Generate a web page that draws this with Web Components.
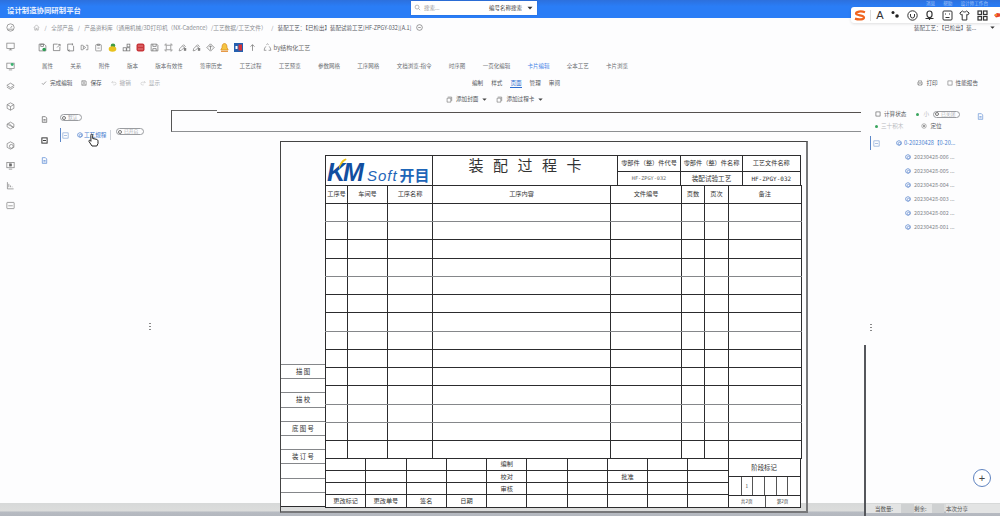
<!DOCTYPE html>
<html lang="zh">
<head>
<meta charset="utf-8">
<title>设计制造协同研制平台</title>
<style>
	html, body {
		margin: 0;
		height: 516px;
		overflow: hidden;
		background: #fdfdfe;
		font: 5.6px "Noto Sans CJK SC", "Liberation Sans", sans-serif;
		color: #5a5d63;
	}
	body {
		display: flex;
		flex-direction: column;
		position: relative;
	}
</style>
</head>
<body>
<app-header></app-header>
<sogou-bar></sogou-bar>
<app-shell>
	<side-nav slot="nav"></side-nav>
	<bread-crumb></bread-crumb>
	<tool-bar></tool-bar>
	<tab-row></tab-row>
	<action-bar></action-bar>
	<add-row></add-row>
	<work-space>
		<left-panel slot="left"></left-panel>
		<sheet-canvas slot="canvas">
			<process-card></process-card>
		</sheet-canvas>
		<right-panel slot="right"></right-panel>
	</work-space>
</app-shell>
<status-bar></status-bar>
<add-button></add-button>

<script>
	const ICONS = {
		home: '<path d="M2 8l6-6 6 6M4 7v7h3v-4h2v4h3V7"/>',
		gauge: '<circle cx="8" cy="8" r="6.5"/><path d="M8 9l3-4M3.5 11h9"/>',
		monitor: '<rect x="1.5" y="2" width="13" height="9.5"/><path d="M5 14h6M8 11.5V14"/>',
		monitorGreen: '<rect x="1.5" y="2" width="13" height="9.5"/><path d="M5 14h6"/><circle cx="11" cy="4.5" r="2.6" fill="#3cb371" stroke="none"/>',
		layers: '<path d="M8 2l6.5 4L8 10 1.5 6zM1.5 9L8 13l6.5-4"/>',
		cube: '<path d="M8 1.5l6 3.2v6.6l-6 3.2-6-3.2V4.7zM2 4.7L8 8l6-3.3M8 8v6.5"/>',
		stack: '<path d="M8 2l6 3.5v5L8 14l-6-3.5v-5zM2 5.5l12 6M5 4l8 8"/>',
		hexdot: '<path d="M8 1.5l6 3.2v6.6l-6 3.2-6-3.2V4.7z"/><circle cx="9.5" cy="9.5" r="3.4"/>',
		screen: '<rect x="1.5" y="2.5" width="13" height="9.5"/><path d="M5 14.5h6"/><rect x="6" y="5" width="4" height="4" fill="#666"/>',
		chart: '<path d="M2.5 2v12h11M5 11V5M8 11V8M11 11v-1"/>',
		panel: '<rect x="1.5" y="2.5" width="13" height="11" rx="1"/><path d="M4 8.5h8"/>',
		save: '<path d="M2 2h9l3 3v9H2z"/><rect x="5" y="2" width="5" height="4"/><circle cx="11" cy="11.5" r="3.2" fill="#2f9e55" stroke="none"/>',
		boxOut: '<path d="M10 2H2.5v11.5H14V7M9 8l5-5M11 2.5h3.5V6"/>',
		boxSync: '<path d="M12 2H3v11h3M5 14h8.500V5M10.500 1l2 1.500-2 1.500M6 12l-2 1.500 2 1.500"/>',
		arrowBox: '<path d="M5.500 4H2v8h3.500M10.500 4H14v8h-3.500M6 5l4 3-4 3z"/>',
		clip: '<rect x="3" y="3" width="10" height="11" rx="1"/><path d="M6 2h4v2.500H6zM6 9h4"/>',
		blocks: '<rect x="2" y="8.500" width="5.500" height="5.500"/><rect x="8.500" y="8.500" width="5.500" height="5.500"/><rect x="9" y="2" width="5" height="5"/>',
		floppy: '<path d="M2 2h10l2 2v10H2z"/><path d="M5 2v4h6V2M5 14v-4h6v4"/>',
		frame: '<path d="M5 2H2v3M11 2h3v3M14 11v3h-3M5 14H2v-3M4 4h8v8H4z"/>',
		pen: '<path d="M2 14l1-4 7-7 3 3-7 7zM8 5l3 3"/><rect x="11" y="10" width="3" height="3" fill="#777"/>',
		diamond: '<path d="M8 1.500l6.500 6.500L8 14.500 1.500 8zM8 12V5M5.500 7.500L8 5l2.500 2.500"/>',
		up: '<path d="M8 14V3M4.500 6.500L8 3l3.500 3.500"/>',
		recycle: '<path d="M6 3l2-1.500L10 3M3 9l-1 4h4M13 9l1 4h-4M5 6l-2 3M11 6l2 3"/>',
		check: '<path d="M2.500 8.500l3.500 3.500 7.500-8"/>',
		undo: '<path d="M5 3L2 6l3 3M2 6h8a3.500 3.500 0 010 7H6"/>',
		redo: '<path d="M11 3l3 3-3 3M14 6H6a3.500 3.500 0 000 7h4"/>',
		print: '<path d="M4 6V2h8v4M4 12H2V6h12v6h-2M4 10h8v4H4z"/>',
		square: '<rect x="2.500" y="2.500" width="11" height="11"/>',
		copy: '<path d="M4 2.500h9v9M2.500 5h8.500v9H2.500z"/>',
		file: '<path d="M3 1.500h7l3 3v10H3zM5.500 8h5M5.500 11h5"/>',
		clock: '<circle cx="8" cy="8" r="6.500"/><path d="M5 8h6"/>',
		target: '<circle cx="8" cy="8" r="6"/><circle cx="8" cy="8" r="1.800" fill="#666"/>',
		search: '<circle cx="7" cy="7" r="4.500"/><path d="M10.500 10.500L14 14"/>',
		treeBox: '<rect x="2" y="2" width="12" height="12"/><path d="M4.500 8h7"/>',
		caret: '<path d="M3 5.500h10L8 11z" fill="currentColor" stroke="none"/>'
	};

	class UiIcon extends HTMLElement {
		connectedCallback() {
			const size = this.getAttribute('s') || 9;
			const color = this.getAttribute('c') || '#6b6e73';
			const w = this.getAttribute('w') || 1.3;
			this.attachShadow({mode: 'open'}).innerHTML = `
				<style>:host { display: inline-flex; flex: none; color: ${color}; }</style>
				<svg width="${size}" height="${size}" viewBox="0 0 16 16" fill="none" stroke="currentColor" stroke-width="${w}">${ICONS[this.getAttribute('n')] || this.innerHTML}</svg>`;
		}
	}

	class AppHeader extends HTMLElement {
		constructor() {
			super();
			this.attachShadow({mode: 'open'}).innerHTML = `
				<style>
					:host {
						display: flex;
						align-items: center;
						height: 18px;
						padding-left: 7px;
						background: linear-gradient(#2d70dd, #2a7df6 35%);
						color: #fff;
					}
					.title { width: 404px; font-size: 7.4px; font-weight: 700; color: #eef4ff; }
					.search {
						display: flex;
						align-items: center;
						width: 126px;
						height: 14px;
						box-sizing: border-box;
						margin-top: -3px;
						padding: 0 3px;
						background: #fff;
						color: #999;
						font-size: 5.5px;
						box-shadow: 0 0 1px rgba(0,0,0,.25);
					}
					.ph { margin-left: 3px; width: 65px; }
					.kind { color: #444; width: 37px; }
					.user { margin-left: auto; display: flex; gap: 8px; padding: 0 12px 11px 0; font-size: 4.600px; line-height: 1; color: #a9c6f7; }
				</style>
				<div class="title">设计制造协同研制平台</div>
				<div class="search">
					<ui-icon n="search" s="7" c="#888"></ui-icon>
					<span class="ph">搜索...</span>
					<span class="kind">编号名称搜索</span>
					<ui-icon n="caret" s="8" c="#333"></ui-icon>
				</div>
				<div class="user"><span>消息</span><span>帮助</span><span>设计师工作台</span></div>`;
		}
	}

	class SogouBar extends HTMLElement {
		constructor() {
			super();
			this.attachShadow({mode: 'open'}).innerHTML = `
				<style>
					:host {
						position: absolute;
						left: 851px;
						top: 7px;
						width: 149px;
						height: 16px;
						display: flex;
						align-items: center;
						z-index: 5;
						background: #fff;
						border-radius: 3px 0 0 3px;
						box-shadow: 0 1px 3px rgba(0,0,0,.12);
						color: #333;
					}
					svg { flex: none; }
					.logo { margin-left: 3px; }
					.sep { width: 1px; height: 11px; background: #ddd; margin: 0 5px 0 4px; }
					.a { font: 11px "Liberation Sans", sans-serif; width: 10px; text-align: center; margin-right: 6px; }
					.i { margin-right: 6.500px; }
				</style>
				<svg class="logo" width="12" height="11" viewBox="0 0 12 11" fill="none" stroke="#f0641e" stroke-width="2.200">
					<path d="M11 2.200C7 .8 2 1.500 2 3.600c0 2 8 1.600 8 3.800C10 9.500 5 10 1 8.600"/>
				</svg>
				<div class="sep"></div>
				<div class="a">A</div>
				<svg class="i" width="10" height="10" viewBox="0 0 10 10" fill="#222"><circle cx="3" cy="2.500" r="1.500"/><circle cx="7" cy="6" r="1.800"/></svg>
				<svg class="i" width="11" height="11" viewBox="0 0 11 11" fill="none" stroke="#333"><circle cx="5.500" cy="5.500" r="4.700"/><path d="M3.500 4v2a2 2 0 004 0V4"/></svg>
				<svg class="i" width="11" height="11" viewBox="0 0 11 11" fill="none" stroke="#333" stroke-width="1.200"><rect x="3" y="1" width="5" height="6.500" rx="2.500"/><path d="M1.500 8.500h8M5.500 8v2"/></svg>
				<svg class="i" width="11" height="11" viewBox="0 0 11 11" fill="none" stroke="#333"><rect x="1" y="1" width="9" height="9" rx="1"/><path d="M3 4h1M7 4h1M3.500 7.500h4"/></svg>
				<svg class="i" width="11" height="11" viewBox="0 0 11 11" fill="none" stroke="#333"><path d="M3.500 1L.8 3l1.400 2 1-.6V10h4.600V4.400l1 .6 1.400-2L7.500 1c-.5 1.300-3.500 1.300-4 0z"/></svg>
				<svg class="i" width="11" height="11" viewBox="0 0 11 11" fill="none" stroke="#333" stroke-width="1.200"><rect x="1" y="1" width="3.500" height="3.500"/><rect x="6.500" y="1" width="3.500" height="3.500"/><rect x="1" y="6.500" width="3.500" height="3.500"/><rect x="6.500" y="6.500" width="3.500" height="3.500"/></svg>
				<svg width="6" height="7" viewBox="0 0 6 7"><path d="M0 3l3-2 3 .5v3l-4 1z" fill="#e8452c"/><circle cx="2" cy="3" r="1" fill="#f5a623"/></svg>`;
		}
	}

	class AppShell extends HTMLElement {
		constructor() {
			super();
			this.attachShadow({mode: 'open'}).innerHTML = `
				<style>
					:host { display: flex; flex: 1; min-height: 0; }
					.main { flex: 1; min-width: 0; display: flex; flex-direction: column; }
				</style>
				<slot name="nav"></slot>
				<div class="main"><slot></slot></div>`;
		}
	}

	class SideNav extends HTMLElement {
		constructor() {
			super();
			const names = ['gauge', 'monitor', 'monitorGreen', 'layers', 'cube', 'stack', 'hexdot', 'screen', 'chart', 'panel'];
			this.attachShadow({mode: 'open'}).innerHTML = `
				<style>
					:host {
						display: flex;
						flex-direction: column;
						gap: 10.800px;
						width: 21px;
						padding: 4.500px 0 0 6px;
						box-sizing: border-box;
					}
				</style>
				${names.map(n => `<ui-icon n="${n}" s="9" c="#777" w="1.200"></ui-icon>`).join('')}`;
		}
	}

	class BreadCrumb extends HTMLElement {
		constructor() {
			super();
			this.attachShadow({mode: 'open'}).innerHTML = `
				<style>
					:host {
						display: flex;
						align-items: center;
						height: 19px;
						padding-left: 12px;
						gap: 4.500px;
						font-size: 5.500px;
						color: #8b8e93;
						white-space: nowrap;
						box-sizing: border-box;
					}
					.cur { color: #55585e; }
					.wide { font-size: 5.700px; }
					.end { margin-left: auto; margin-right: 4px; width: 82px; display: flex; justify-content: space-between; align-items: center; }
				</style>
				<ui-icon n="home" s="7" c="#999"></ui-icon>
				<span>/</span><span>全部产品</span>
				<span>/</span><span class="wide">产品资料库（通用机械/3D打印机（NX-Cadence）/工艺数据/工艺文件）</span>
				<span>/</span><span class="cur">装配工艺：【已检出】装配试验工艺[HF-ZPGY-032][A.1]</span>
				<ui-icon n="clock" s="7" c="#555"></ui-icon>
				<span class="cur end">装配工艺：【已检出】装...<ui-icon n="caret" s="7" c="#333"></ui-icon></span>`;
		}
	}

	class ToolBar extends HTMLElement {
		constructor() {
			super();
			const list = [
				['save', '#666'], ['boxOut', '#666'], ['boxSync', '#666'], ['arrowBox', '#777'], ['clip', '#777'],
				['duck'], ['blocks', '#666'], ['stamp'], ['floppy', '#666'], ['frame', '#777'], ['pen', '#777'], ['pen', '#777'],
				['diamond', '#666'], ['bell'], ['flag'], ['up', '#666']
			];
			const custom = {
				duck: '<svg width="9" height="9" viewBox="0 0 9 9"><circle cx="5" cy="2.800" r="2.300" fill="#3f9b45"/><ellipse cx="4.500" cy="6" rx="3.800" ry="2.700" fill="#e8c21f"/></svg>',
				stamp: '<svg width="9" height="9" viewBox="0 0 9 9"><rect x=".5" y=".5" width="8" height="8" rx="2" fill="#c8363a"/><path d="M2 3h5M2 6h5" stroke="#e99" stroke-width=".8"/></svg>',
				bell: '<svg width="9" height="9" viewBox="0 0 9 9"><path d="M4.500.5C2.500.5 2 2.500 2 4.500L.8 7h7.400L7 4.500C7 2.500 6.500.5 4.500.5z" fill="#f5c542" stroke="#d98a1d" stroke-width=".7"/><path d="M1 8.300h7" stroke="#e0801a"/></svg>',
				flag: '<svg width="9" height="9" viewBox="0 0 9 9"><rect width="9" height="9" fill="#2460b0"/><rect x="4.500" y="1.500" width="3.500" height="6" fill="#d3343a"/><rect x="1.500" y="3" width="2" height="3" fill="#fff"/></svg>'
			};
			this.attachShadow({mode: 'open'}).innerHTML = `
				<style>
					:host {
						display: flex;
						align-items: center;
						gap: 5px;
						height: 20px;
						padding-left: 16.500px;
						box-sizing: border-box;
					}
					.last { display: flex; align-items: center; gap: 2px; margin-left: 1px; font-size: 6px; color: #666; }
				</style>
				${list.map(([n, c]) => custom[n] || `<ui-icon n="${n}" s="9" c="${c}" w="1.200"></ui-icon>`).join('')}
				<span class="last"><ui-icon n="recycle" s="9" c="#777" w="1.200"></ui-icon>by结构化工艺</span>`;
		}
	}

	class TabRow extends HTMLElement {
		constructor() {
			super();
			const tabs = ['属性', '关系', '附件', '版本', '版本有效性', '签审历史', '工艺过程', '工艺预览', '参数网格', '工序网格', '文档浏览-指令', '时序图', '一页化编辑', '卡片编辑', '全本工艺', '卡片浏览'];
			this.attachShadow({mode: 'open'}).innerHTML = `
				<style>
					:host {
						display: flex;
						align-items: center;
						gap: 17.300px;
						height: 18px;
						padding-left: 21px;
						font-size: 5.500px;
						color: #6a6d72;
						white-space: nowrap;
					}
					.on { color: #4a86e8; }
				</style>
				${tabs.map(t => `<span class="${t === '卡片编辑' ? 'on' : ''}">${t}</span>`).join('')}`;
		}
	}

	class ActionBar extends HTMLElement {
		constructor() {
			super();
			this.attachShadow({mode: 'open'}).innerHTML = `
				<style>
					:host {
						display: flex;
						align-items: center;
						height: 16px;
						padding-left: 20px;
						font-size: 5.600px;
						color: #55585d;
						white-space: nowrap;
					}
					.grp { display: flex; align-items: center; gap: 3px; margin-right: 9px; }
					.off { color: #a9acb0; }
					.mid { display: flex; gap: 8px; margin-left: 303px; }
					.on { color: #2f6fd0; box-shadow: 0 1px 0 #2f6fd0; }
					.right { display: flex; gap: 9px; margin-left: auto; margin-right: 22px; }
				</style>
				<span class="grp"><ui-icon n="check" s="6" c="#444"></ui-icon>完成编辑</span>
				<span class="grp"><ui-icon n="floppy" s="6" c="#666"></ui-icon>保存</span>
				<span class="grp off"><ui-icon n="undo" s="6" c="#bbb"></ui-icon>撤销</span>
				<span class="grp off"><ui-icon n="redo" s="6" c="#bbb"></ui-icon>显示</span>
				<span class="mid"><span>编制</span><span>样式</span><span class="on">页面</span><span>管理</span><span>审阅</span></span>
				<span class="right">
					<span class="grp" style="margin:0"><ui-icon n="print" s="6" c="#666"></ui-icon>打印</span>
					<span class="grp" style="margin:0"><ui-icon n="square" s="6" c="#555"></ui-icon>性能报告</span>
				</span>`;
		}
	}

	class AddRow extends HTMLElement {
		constructor() {
			super();
			this.attachShadow({mode: 'open'}).innerHTML = `
				<style>
					:host {
						display: flex;
						align-items: center;
						height: 16px;
						padding-left: 425px;
						font-size: 5.600px;
						color: #55585d;
						gap: 3px;
					}
					.b { margin-left: 5px; }
				</style>
				<ui-icon n="copy" s="7" c="#666"></ui-icon><span>添加封面</span><ui-icon n="caret" s="7" c="#444"></ui-icon>
				<ui-icon class="b" n="copy" s="7" c="#666"></ui-icon><span>添加过程卡</span><ui-icon n="caret" s="7" c="#444"></ui-icon>`;
		}
	}

	class WorkSpace extends HTMLElement {
		constructor() {
			super();
			this.attachShadow({mode: 'open'}).innerHTML = `
				<style>
					:host { display: flex; flex: 1; min-height: 0; position: relative; z-index: 1; }
				</style>
				<slot name="left"></slot>
				<slot name="canvas"></slot>
				<slot name="right"></slot>`;
		}
	}

	class MiniToggle extends HTMLElement {
		constructor() {
			super();
			this.attachShadow({mode: 'open'}).innerHTML = `
				<style>
					:host {
						display: inline-flex;
						align-items: center;
						height: 7px;
						box-sizing: border-box;
						padding: 0 2px 0 1px;
						border: 1px solid #9a9ca0;
						border-radius: 4px;
						font-size: 4.800px;
						line-height: 1;
						color: #a9abaf;
						gap: 2px;
						white-space: nowrap;
					}
					i { width: 4px; height: 4px; border-radius: 50%; background: #fff; border: 1px solid #777; box-sizing: border-box; flex: none; }
				</style>
				<i></i><slot></slot>`;
		}
	}

	class LeftPanel extends HTMLElement {
		constructor() {
			super();
			this.attachShadow({mode: 'open'}).innerHTML = `
				<style>
					:host {
						display: flex;
						width: 150px;
						box-sizing: border-box;
						padding: 7px 0 0 20px;
						position: relative;
						flex: none;
					}
					.icons { display: flex; flex-direction: column; gap: 13.500px; width: 19px; padding-top: 2px; flex: none; }
					.col { display: flex; flex-direction: column; }
					.tree { display: flex; align-items: center; margin-top: 5px; height: 18px; font-size: 5.600px; color: #4a7fd0; }
					.bar { width: 1px; height: 14px; background: #5b86c8; margin-right: 1px; }
					.cap { display: flex; align-items: center; gap: 1px; margin-left: 8px; width: 34px; }
					.div { width: 1px; height: 10px; background: #cfd3da; margin: 0 5px 0 -1px; }
					.sw { align-self: flex-start; margin-top: 2px; }
					.hand { position: absolute; left: 67px; top: 26px; }
					.dots { position: absolute; left: 128px; top: 215px; width: 2px; height: 8px; background: radial-gradient(circle, #888 .7px, transparent 1px) 0 0/2px 3px; }
				</style>
				<div class="icons">
					<ui-icon n="file" s="7" c="#555" w="1.500"></ui-icon>
					<ui-icon n="treeBox" s="7" c="#333" w="2.200"></ui-icon>
					<ui-icon n="file" s="7" c="#4a7fd0" w="1.500"></ui-icon>
				</div>
				<div class="col">
					<mini-toggle style="width:22px">默认</mini-toggle>
					<div class="tree">
						<span class="bar"></span>
						<ui-icon n="treeBox" s="7" c="#6d93cc"></ui-icon>
						<span class="cap"><ui-icon n="hexdot" s="6" c="#5f8bd0" w="2"></ui-icon>工艺规程</span>
						<span class="div"></span>
						<mini-toggle class="sw" style="width:28px">已开启</mini-toggle>
					</div>
				</div>
				<svg class="hand" width="11" height="14" viewBox="0 0 11 14"><path d="M3.500 1.200c.9 0 1.200.6 1.200 1.300v3l3.300.7c1.400.3 2 .9 2 2v2.300L8.800 13H4L1 8.500c-.5-1 .6-1.600 1.300-.9l.6.7V2.500c0-.8.1-1.300.6-1.300z" fill="#fff" stroke="#222"/></svg>
				<span class="dots"></span>`;
		}
	}

	class SheetCanvas extends HTMLElement {
		constructor() {
			super();
			this.attachShadow({mode: 'open'}).innerHTML = `
				<style>
					:host { display: block; width: 695px; flex: none; position: relative; padding-top: 2px; box-sizing: border-box; }
					.ruler { height: 22px; width: 690px; box-sizing: border-box; border-left: 1px solid #555; border-bottom: 1.500px solid #8d8f92; position: relative; }
					.a { height: 1px; width: 45px; background: #666; margin-top: 1px; }
					.b { height: 1px; background: #55514f; margin: 1px 0 0 45px; }
					.wrap { margin: 9px 0 0 109px; }
					.scroll { position: absolute; left: 693px; top: 238px; width: 2px; height: 171px; background: #55575c; }
				</style>
				<div class="ruler"><div class="a"></div><div class="b"></div></div>
				<div class="wrap"><slot></slot></div>
				<div class="scroll"></div>`;
		}
	}

	class ProcessCard extends HTMLElement {
		constructor() {
			super();
			const lines = [203, 221, 239, 258, 276, 294, 312, 331, 349, 367, 385, 404, 422, 440, 458];
			const gray = [221, 276, 331, 404, 422];
			const widths = [22, 40, 45, 178, 71, 23, 24, 72.5];
			const heads = ['工序号', '车间号', '工序名称', '工序内容', '文件编号', '页数', '页次', '备注'];
			let rows = '';
			for (let i = 1; i < lines.length; i++) {
				const cls = gray.includes(lines[i]) ? 'g' : '';
				rows += `<tr class="${cls}" style="height:${lines[i] - lines[i - 1]}px">${widths.map(() => '<td></td>').join('')}</tr>`;
			}
			const stamps = ['描 图', '', '描 校', '', '底 图 号', '', '装 订 号', '', '', ''];
			const low = [
				['', '', '', '', '编制', '', '', '', '', ''],
				['', '', '', '', '校对', '', '', '批准', '', ''],
				['', '', '', '', '审核', '', '', '', '', ''],
				['更改标记', '更改单号', '签名', '日期', '', '', '', '', '', '']
			];
			const lowRows = low.map((r, i) => `<tr style="height:12px">${r.map(t => `<td>${t}</td>`).join('')}${i === 0 ? `<td rowspan="4" class="stage"><div class="st"><div class="st1">阶段标记</div><div class="st2"><i></i><i>1</i><i></i><i></i><i></i><i></i></div><div class="st3"><i>共2页</i><i>第2页</i></div></div></td>` : ''}</tr>`).join('');
			this.attachShadow({mode: 'open'}).innerHTML = `
				<style>
					:host {
						display: flex;
						width: 528px;
						height: 372px;
						box-sizing: border-box;
						padding-top: 13px;
						border: 1px solid #444;
						border-right: 2px solid #77787a;
						border-bottom: 2px solid #77787a;
						color: #333;
					}
					.stamps {
						align-self: flex-start;
						margin-top: 209px;
						width: 44px;
						display: flex;
						flex-direction: column;
						flex: none;
						background: #fff;
						border-bottom: 1px solid #2c2c2e;
					}
					.stamps div {
						height: 14.200px;
						border-top: 1.500px solid #85878a;
						box-sizing: border-box;
						display: flex;
						align-items: center;
						justify-content: center;
						font-size: 6.400px;
						white-space: pre;
					}
					.body { width: 476px; flex: none; background: #fff; height: 352px; }
					table { border-collapse: collapse; table-layout: fixed; width: 475.500px; }
					td { border: 1px solid #2c2c2e; padding: 0; text-align: center; font-size: 6.200px; line-height: 1; overflow: hidden; white-space: nowrap; }
					tr.g td { border-bottom: 1.500px solid #85878a; }
					.head td.s { font-size: 6.200px; }
					.big { font-size: 6.600px; }
					.mono { font: 5.200px "DejaVu Sans Mono", monospace; color: #666; }
					.mono.d { font-size: 6px; color: #333; }
					td.title { vertical-align: top; padding-top: 1px; font-size: 15px; letter-spacing: 9.500px; text-indent: 9.500px; color: #333; }
					td.logo { position: relative; text-align: left; overflow: visible; }
					.logo-row { display: flex; align-items: baseline; height: 28px; box-sizing: border-box; padding: 3px 0 0 1px; color: #124e9f; }
					.km { font: italic 700 25px/1 "Liberation Sans", sans-serif; letter-spacing: -2px; margin-right: 5px; }
					.soft { font: italic 400 15px/1 "Liberation Sans", sans-serif; color: #1f66b8; letter-spacing: 1px; margin-right: 2px; }
					.cn { font-weight: 700; font-size: 15px; line-height: 1; color: #1f66b8; }
					.moon { position: absolute; left: 12px; top: 2px; }
					.stage { vertical-align: top; }
					.st { display: flex; flex-direction: column; height: 47.500px; }
					.st1 { height: 18px; line-height: 18px; font-size: 6.400px; border-bottom: 1px solid #2c2c2e; box-sizing: border-box; }
					.st2 { display: grid; grid-template-columns: 12px 11px 12px 12px 11px 1fr; height: 19px; border-bottom: 1px solid #2c2c2e; box-sizing: border-box; }
					.st2 i, .st3 i { font-style: normal; display: flex; align-items: center; justify-content: center; font-size: 4.600px; }
					.st2 i + i { border-left: 1px solid #555; }
					.st3 { display: grid; grid-template-columns: 36px 1fr; height: 10.500px; }
					.st3 i + i { border-left: 1px solid #555; }
				</style>
				<div class="stamps">${stamps.map(t => `<div>${t}</div>`).join('')}</div>
				<div class="body">
					<table class="head">
						<colgroup><col style="width:107px"><col style="width:185px"><col style="width:63px"><col style="width:62px"><col></colgroup>
						<tr style="height:16px">
							<td rowspan="2" class="logo">
								<svg class="moon" width="9" height="12" viewBox="0 0 9 12"><path d="M8 .5C4 1.500 .8 5.500 1 11.500 2.500 7.500 4.500 4 8.500 1.800z" fill="#f0c419"/></svg>
								<div class="logo-row"><span class="km">KM</span><span class="soft">Soft</span><span class="cn">开目</span></div>
							</td>
							<td rowspan="2" class="title">装配过程卡</td>
							<td class="s">零部件（整）件代号</td><td class="s">零部件（整）件名称</td><td class="s">工艺文件名称</td>
						</tr>
						<tr style="height:14px" class="g">
							<td><span class="mono">HF-ZPGY-032</span></td><td class="big">装配试验工艺</td><td><span class="mono d">HF-ZPGY-032</span></td>
						</tr>
					</table>
					<table class="hd" style="margin-top:-1px">
						<colgroup>${widths.map(w => `<col style="width:${w}px">`).join('')}</colgroup>
						<tr style="height:18px">${heads.map(h => `<td>${h}</td>`).join('')}</tr>
						${rows}
					</table>
					<table style="margin-top:-1px">
						<colgroup>${'<col style="width:40.270px">'.repeat(10)}<col></colgroup>
						${lowRows}
					</table>
				</div>`;
		}
	}

	class RightPanel extends HTMLElement {
		constructor() {
			super();
			const items = ['006', '005', '004', '003', '002', '001'];
			this.attachShadow({mode: 'open'}).innerHTML = `
				<style>
					:host {
						display: block;
						flex: 1;
						position: relative;
						padding: 1px 0 0 4px;
						font-size: 5.600px;
						color: #55585d;
						white-space: nowrap;
					}
					.r { display: flex; align-items: center; height: 12px; padding-left: 5px; gap: 3px; }
					.off { color: #b9bbc0; }
					.dot { width: 3px; height: 3px; background: #3aa55e; border-radius: 50%; display: inline-block; }
					.tree { display: flex; align-items: center; height: 14px; margin-top: 4px; color: #4a7fd0; }
					.bar { width: 1px; height: 14px; background: #5b86c8; margin-right: 2px; }
					.item { display: flex; align-items: center; gap: 3px; height: 14px; padding-left: 35px; color: #85888e; font-size: 5.400px; }
					.root { margin-left: 16px; display: flex; gap: 2px; align-items: center; }
					.handle { position: absolute; left: 4px; top: 216px; width: 2px; height: 8px; background: radial-gradient(circle, #888 .7px, transparent 1px) 0 0/2px 3px; }
				</style>
				<div class="r">
					<ui-icon n="square" s="6" c="#333"></ui-icon><span>计算状态</span>
					<span class="dot" style="margin-left:7px"></span><span class="off" style="margin:0 1px">小</span>
					<mini-toggle style="width:27px">已关闭</mini-toggle>
					<ui-icon n="file" s="7" c="#4a7fd0" style="margin:4px 0 0 14px"></ui-icon>
				</div>
				<div class="r">
					<span class="dot"></span><span class="off">三十积木</span>
					<ui-icon n="target" s="6" c="#666" style="margin-left:15px"></ui-icon><span>定位</span>
				</div>
				<div class="tree">
					<span class="bar"></span><ui-icon n="treeBox" s="7" c="#6d93cc"></ui-icon>
					<span class="root"><ui-icon n="hexdot" s="6" c="#5f8bd0" w="2"></ui-icon>0-20230428【0-20...</span>
				</div>
				${items.map(i => `<div class="item"><ui-icon n="hexdot" s="6" c="#7fa0d8" w="2.500"></ui-icon>20230428-${i} ...</div>`).join('')}
				<span class="handle"></span>`;
		}
	}

	class StatusBar extends HTMLElement {
		constructor() {
			super();
			this.attachShadow({mode: 'open'}).innerHTML = `
				<style>
					:host {
						display: flex;
						align-items: center;
						justify-content: flex-end;
						position: absolute;
						left: 0;
						right: 0;
						bottom: 0;
						height: 13px;
						background: linear-gradient(#d7d9d9, #dcdddc 60%, #b7bbc2 70%, #b3b7be);
						color: #555;
						font-size: 5.500px;
					}
					span { display: flex; align-items: center; height: 9px; margin-bottom: 2px; }
					.a { width: 36px; padding-left: 10px; box-sizing: border-box; background: #e3e4e4; }
					.c { width: 13px; background: #cfd1d2; }
					.b { width: 18px; background: #e3e4e4; }
					.d { width: 12px; background: #cfd1d2; margin-right: 2px; }
					.e { width: 54px; box-sizing: border-box; background: #e3e4e4; }
				</style>
				<span class="a">当数量:</span><span class="c"></span><span class="b">剩余:</span><span class="d"></span><span class="e">本次分享</span>`;
		}
	}

	class AddButton extends HTMLElement {
		constructor() {
			super();
			this.attachShadow({mode: 'open'}).innerHTML = `
				<style>
					:host {
						position: absolute;
						left: 973px;
						top: 469px;
						width: 18px;
						height: 18px;
						box-sizing: border-box;
						z-index: 3;
						border: 1px solid #5f83c0;
						border-radius: 50%;
						display: flex;
						align-items: center;
						justify-content: center;
						background: #fff;
						font: 11px/1 "Liberation Sans", sans-serif;
						color: #444;
					}
				</style>+`;
		}
	}

	customElements.define('ui-icon', UiIcon);
	customElements.define('app-header', AppHeader);
	customElements.define('sogou-bar', SogouBar);
	customElements.define('app-shell', AppShell);
	customElements.define('side-nav', SideNav);
	customElements.define('bread-crumb', BreadCrumb);
	customElements.define('tool-bar', ToolBar);
	customElements.define('tab-row', TabRow);
	customElements.define('action-bar', ActionBar);
	customElements.define('add-row', AddRow);
	customElements.define('work-space', WorkSpace);
	customElements.define('mini-toggle', MiniToggle);
	customElements.define('left-panel', LeftPanel);
	customElements.define('sheet-canvas', SheetCanvas);
	customElements.define('process-card', ProcessCard);
	customElements.define('right-panel', RightPanel);
	customElements.define('status-bar', StatusBar);
	customElements.define('add-button', AddButton);
</script>
</body>
</html>
